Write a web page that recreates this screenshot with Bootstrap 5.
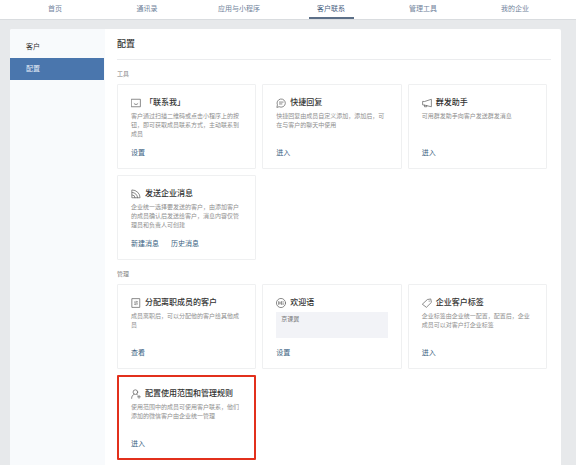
<!DOCTYPE html>
<html lang="zh-CN">
<head>
<meta charset="utf-8">
<meta name="viewport" content="width=device-width, initial-scale=1">
<title>客户联系 - 配置</title>
<link href="https://cdn.jsdelivr.net/npm/bootstrap@5.3.0/dist/css/bootstrap.min.css" rel="stylesheet">
<style>
body{background:#e7e9eb;font-family:"Liberation Sans","Noto Sans CJK SC",sans-serif;font-size:6px;line-height:9px;color:#333}
a{text-decoration:none}
.topbar{background:#fff;height:20px;padding:0 15px 0 9px;border-bottom:1px solid #d9dcdf}
.topbar .nav-link{font-size:7px;line-height:18px;padding:0;width:45px;height:19px;margin:0 auto;color:#71839b;border-bottom:2px solid transparent;white-space:nowrap}
.topbar .nav-link.active{color:#48617f;border-color:#5c6f87}
.shell{padding:9px 15px 0 10px}
.panel{background:#fff;border-radius:2px 2px 0 0}
.side{width:95px;background:#f8fafc;padding-top:7px;border-radius:2px 0 0 0}
.side .nav-link{font-size:7px;line-height:22px;padding:0 16px;color:#333;margin-right:1px}
.side .nav-link.active{background:#4a76ad;color:#e3ecf7}
.content{padding:0 10px 6px 12px;min-width:0}
.page-title{font-size:9px;line-height:30px;font-weight:500;margin:0;border-bottom:1px solid #ebecee;color:#333}
.sect{font-size:6px;line-height:10px;color:#808080;font-weight:400;margin:9px 0 5px}
.tiles{--bs-gutter-x:6px;--bs-gutter-y:6px;margin-right:1px}
.tile{min-height:85px;height:100%;padding:12px 13px 9px;border:1px solid #eff0f1;border-radius:1px}
.tile.marked{border:2px solid #e2301c;padding:11px 12px 8px}
.tile h3{font-size:8px;line-height:12px;font-weight:500;color:#333;margin:0 0 3px;gap:4px;white-space:nowrap}
.tile p{margin:0;color:#8e8e8e}
.tile a{font-size:7px;line-height:12px;color:#3a5f82}
.links{gap:12px}
.ico{width:10px;height:10px;flex:none;fill:none;stroke:#666;stroke-width:1.2;stroke-linecap:round;stroke-linejoin:round}
.greet{background:#f2f3f7;height:26px;padding:3px 5px;color:#777}
</style>
<script src="https://cdn.jsdelivr.net/npm/bootstrap@5.3.0/dist/js/bootstrap.bundle.min.js" defer></script>
</head>
<body class="min-vh-100 d-flex flex-column">
<nav class="topbar" aria-label="主导航">
<ul class="nav row row-cols-6 g-0 text-center">
<li class="col"><a class="nav-link" href="#">首页</a></li>
<li class="col"><a class="nav-link" href="#">通讯录</a></li>
<li class="col"><a class="nav-link" href="#">应用与小程序</a></li>
<li class="col"><a class="nav-link active" aria-current="page" href="#">客户联系</a></li>
<li class="col"><a class="nav-link" href="#">管理工具</a></li>
<li class="col"><a class="nav-link" href="#">我的企业</a></li>
</ul>
</nav>
<div class="shell flex-grow-1 d-flex">
<div class="panel d-flex flex-grow-1">
<aside class="side flex-shrink-0">
<nav class="nav flex-column" aria-label="侧栏">
<a class="nav-link" href="#">客户</a>
<a class="nav-link active" href="#">配置</a>
</nav>
</aside>
<main class="content flex-grow-1">
<h1 class="page-title">配置</h1>
<h2 class="sect">工具</h2>
<div class="row row-cols-3 tiles">
<div class="col"><section class="tile d-flex flex-column">
<h3 class="d-flex align-items-center"><svg class="ico" viewBox="0 0 16 16" aria-hidden="true"><path d="M1 2h14v12H1zM5 9c1.500 2 4.500 2 6 0"/></svg>「联系我」</h3>
<p>客户通过扫描二维码或点击小程序上的按钮，即可获取成员联系方式，主动联系到成员</p>
<div class="links d-flex mt-auto"><a href="#">设置</a></div></section></div>
<div class="col"><section class="tile d-flex flex-column">
<h3 class="d-flex align-items-center"><svg class="ico" viewBox="0 0 16 16" aria-hidden="true"><path d="M1.500 14.500l.8-3.500A6.600 6.600 0 1 1 5.500 14.200zM5.500 6.500h6M5.500 9.500h4"/></svg>快捷回复</h3>
<p>快捷回复由成员自定义添加，添加后，可在与客户的聊天中使用</p>
<div class="links d-flex mt-auto"><a href="#">进入</a></div></section></div>
<div class="col"><section class="tile d-flex flex-column">
<h3 class="d-flex align-items-center"><svg class="ico" viewBox="0 0 16 16" aria-hidden="true"><path d="M1 6v5l3.500.5L15 14V2L4.500 5.500zM4 11.500v2.500h3.500v-2"/></svg>群发助手</h3>
<p>可用群发助手向客户发送群发消息</p>
<div class="links d-flex mt-auto"><a href="#">进入</a></div></section></div>
<div class="col"><section class="tile d-flex flex-column">
<h3 class="d-flex align-items-center"><svg class="ico" viewBox="0 0 16 16" aria-hidden="true"><path d="M2 1.500a12.500 12.500 0 0 1 12.500 12.500H2zM2 5.500a8.500 8.500 0 0 1 8.500 8.500M2 9.500a4.500 4.500 0 0 1 4.500 4.500"/></svg>发送企业消息</h3>
<p>企业统一选择要发送的客户，由添加客户的成员确认后发送给客户，消息内容仅管理员和负责人可创建</p>
<div class="links d-flex mt-auto"><a href="#">新建消息</a><a href="#">历史消息</a></div></section></div>
</div>
<h2 class="sect">管理</h2>
<div class="row row-cols-3 tiles">
<div class="col"><section class="tile d-flex flex-column">
<h3 class="d-flex align-items-center"><svg class="ico" viewBox="0 0 16 16" aria-hidden="true"><path d="M2 1h12v14H2zM5.500 6.500h5l-1.500-1.500M10.500 9.500h-5L7 11"/></svg>分配离职成员的客户</h3>
<p>成员离职后，可以分配他的客户给其他成员</p>
<div class="links d-flex mt-auto"><a href="#">查看</a></div></section></div>
<div class="col"><section class="tile d-flex flex-column">
<h3 class="d-flex align-items-center"><svg class="ico" viewBox="0 0 16 16" aria-hidden="true"><circle cx="8" cy="8" r="7.300"/><path d="M4.500 5.500v5M8.500 5.500v5M4.500 8h4M11.300 7.500v3M11.300 5.300v.2"/></svg>欢迎语</h3>
<div class="greet">京课翼</div>
<div class="links d-flex mt-auto"><a href="#">设置</a></div></section></div>
<div class="col"><section class="tile d-flex flex-column">
<h3 class="d-flex align-items-center"><svg class="ico" viewBox="0 0 16 16" aria-hidden="true"><path d="M1 9.500L8.500 2.500 14 1.500l1 5.500-7.500 7.500zM11.300 5h.5"/></svg>企业客户标签</h3>
<p>企业标签由企业统一配置，配置后，企业成员可以对客户打企业标签</p>
<div class="links d-flex mt-auto"><a href="#">进入</a></div></section></div>
<div class="col"><section class="tile marked d-flex flex-column">
<h3 class="d-flex align-items-center"><svg class="ico" viewBox="0 0 16 16" aria-hidden="true"><circle cx="7" cy="5" r="3.700"/><path d="M1 15c0-3.500 1.500-5.500 4-6.500M9 8.500l1.500 1M10.500 12.500h4.500M12.800 10.300v4.500"/></svg>配置使用范围和管理规则</h3>
<p>使用范围中的成员可使用客户联系，他们添加的微信客户由企业统一管理</p>
<div class="links d-flex mt-auto"><a href="#">进入</a></div></section></div>
</div>
</main>
</div>
</div>
</body>
</html>
